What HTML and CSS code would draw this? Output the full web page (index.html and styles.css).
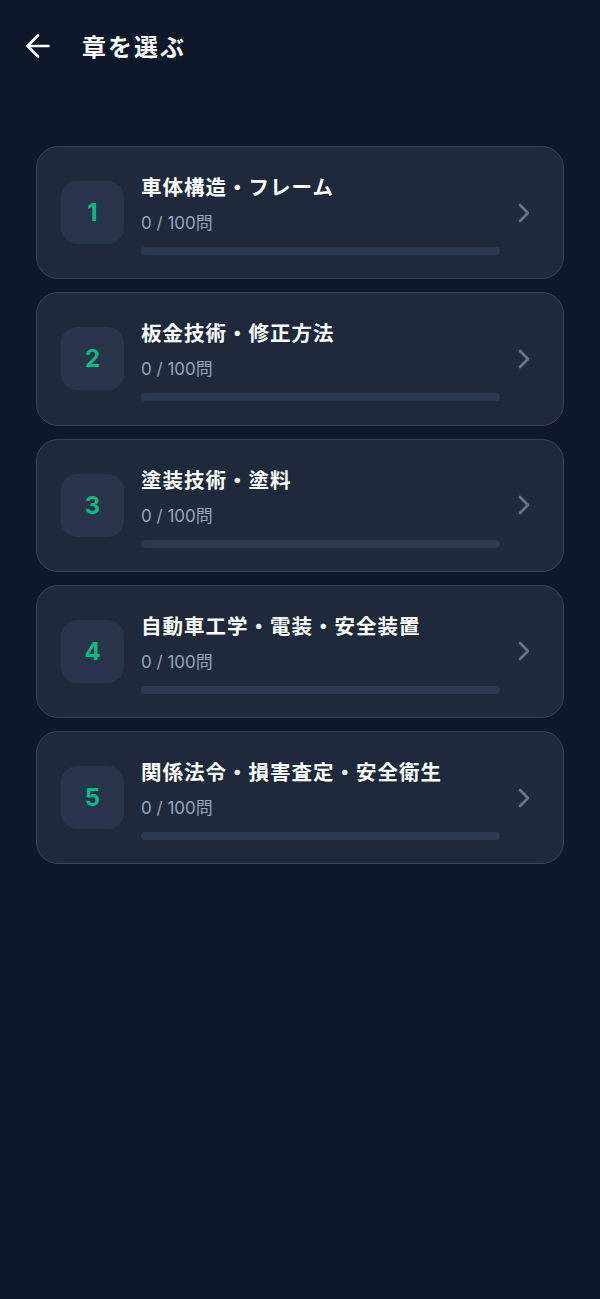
FILE: index.html
```html
<!DOCTYPE html>
<html lang="ja">
<head>
<meta charset="utf-8">
<title>章を選ぶ</title>
<link rel="stylesheet" href="styles.css">
</head>
<body>
<header class="topbar">
  <svg class="back" width="24" height="24" viewBox="0 0 24 24" fill="none" stroke="#ffffff" stroke-width="2.5" stroke-linecap="round" stroke-linejoin="round"><path d="M22.5 12H1.8"/><path d="M12 1.5L1.5 12L12 22.5"/></svg>
  <h1 class="title">章を選ぶ</h1>
</header>
<main class="list">
  <div class="card">
    <div class="num">1</div>
    <div class="info">
      <div class="name">車体構造・フレーム</div>
      <div class="count">0 / 100問</div>
      <div class="bar"></div>
    </div>
    <svg class="chev" width="32" height="32" viewBox="0 0 24 24" fill="none" stroke="#64748b" stroke-width="2" stroke-linecap="round" stroke-linejoin="round"><path d="m9 18 6-6-6-6"/></svg>
  </div>
  <div class="card">
    <div class="num">2</div>
    <div class="info">
      <div class="name">板金技術・修正方法</div>
      <div class="count">0 / 100問</div>
      <div class="bar"></div>
    </div>
    <svg class="chev" width="32" height="32" viewBox="0 0 24 24" fill="none" stroke="#64748b" stroke-width="2" stroke-linecap="round" stroke-linejoin="round"><path d="m9 18 6-6-6-6"/></svg>
  </div>
  <div class="card">
    <div class="num">3</div>
    <div class="info">
      <div class="name">塗装技術・塗料</div>
      <div class="count">0 / 100問</div>
      <div class="bar"></div>
    </div>
    <svg class="chev" width="32" height="32" viewBox="0 0 24 24" fill="none" stroke="#64748b" stroke-width="2" stroke-linecap="round" stroke-linejoin="round"><path d="m9 18 6-6-6-6"/></svg>
  </div>
  <div class="card">
    <div class="num">4</div>
    <div class="info">
      <div class="name">自動車工学・電装・安全装置</div>
      <div class="count">0 / 100問</div>
      <div class="bar"></div>
    </div>
    <svg class="chev" width="32" height="32" viewBox="0 0 24 24" fill="none" stroke="#64748b" stroke-width="2" stroke-linecap="round" stroke-linejoin="round"><path d="m9 18 6-6-6-6"/></svg>
  </div>
  <div class="card">
    <div class="num">5</div>
    <div class="info">
      <div class="name">関係法令・損害査定・安全衛生</div>
      <div class="count">0 / 100問</div>
      <div class="bar"></div>
    </div>
    <svg class="chev" width="32" height="32" viewBox="0 0 24 24" fill="none" stroke="#64748b" stroke-width="2" stroke-linecap="round" stroke-linejoin="round"><path d="m9 18 6-6-6-6"/></svg>
  </div>
</main>
</body>
</html>
```
FILE: styles.css
```css
html, body {
  margin: 0;
  padding: 0;
  background: #0f172a;
  min-height: 100%;
}
body {
  font-family: Inter, "Noto Sans CJK JP", sans-serif;
  color: #ffffff;
  width: 600px;
  min-height: 1299px;
}
.topbar {
  display: flex;
  align-items: center;
  gap: 32px;
  height: 40px;
  padding: 26px 0 0 26px;
}
.back {
  flex: none;
  display: block;
}
.title {
  margin: 0;
  font-family: "Noto Sans CJK JP", sans-serif;
  font-size: 24px;
  font-weight: 700;
  line-height: 40px;
  letter-spacing: 2px;
}
.list {
  display: flex;
  flex-direction: column;
  gap: 13px;
  padding: 80px 36px 0 36px;
}
.card {
  display: flex;
  align-items: center;
  box-sizing: border-box;
  height: 133.25px;
  padding: 0 23px 0 24px;
  background: #1e293b;
  border: 1px solid #35435a;
  border-radius: 22px;
}
.num {
  flex: none;
  width: 63px;
  height: 63px;
  border-radius: 16px;
  background: #273449;
  color: #10b981;
  font-family: Inter, sans-serif;
  font-weight: 700;
  font-size: 24px;
  display: flex;
  align-items: center;
  justify-content: center;
}
.info {
  flex: 1;
  margin-left: 17px;
  margin-right: 8px;
  padding-top: 1px;
}
.name {
  font-family: "Noto Sans CJK JP", sans-serif;
  font-size: 20.5px;
  font-weight: 700;
  line-height: 30px;
  letter-spacing: 1px;
  color: #ffffff;
}
.count {
  margin-top: 10px;
  font-size: 17px;
  line-height: 24px;
  color: #94a3b8;
}
.bar {
  margin-top: 12px;
  height: 8px;
  border-radius: 4px;
  background: #2c3a50;
}
.chev {
  flex: none;
  display: block;
}
```
